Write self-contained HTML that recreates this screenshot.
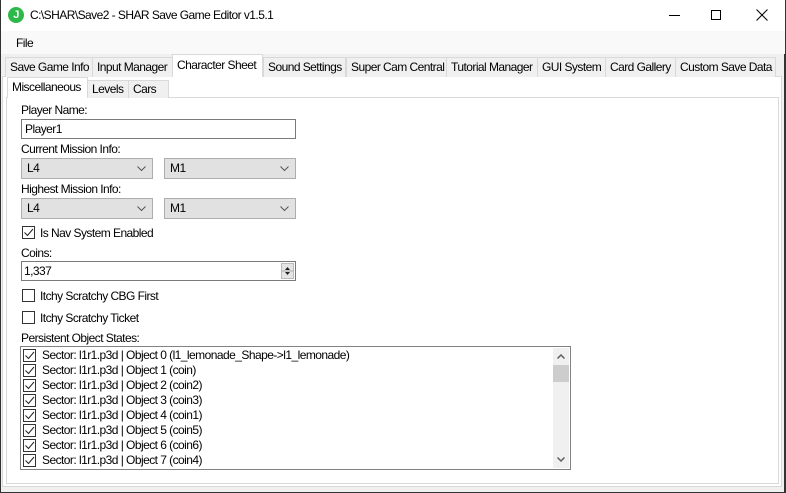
<!DOCTYPE html>
<html><head><meta charset="utf-8"><style>
*{box-sizing:border-box;margin:0;padding:0}
body{width:786px;height:493px;background:#fff;font-family:"Liberation Sans",sans-serif;font-size:12px;color:#000;position:relative;overflow:hidden;letter-spacing:-0.55px}
.a{position:absolute}
.win{left:0;top:0;width:786px;height:493px;border:1px solid #333;border-top:none}
.tab{position:absolute;top:57px;height:20px;border:1px solid #d9d9d9;border-bottom:none;background:#f0f0f0;line-height:18px;padding-left:4px;white-space:nowrap;overflow:hidden}
.stab{position:absolute;top:80px;height:18px;border:1px solid #d9d9d9;border-bottom:none;background:#f0f0f0;line-height:17px;padding-left:4px;white-space:nowrap;overflow:hidden}
.sel{background:#fff;border-color:#d9d9d9;z-index:2}
.box{position:absolute;border:1px solid #7a7a7a;background:#fff}
.cmb{position:absolute;height:21px;border:1px solid #adadad;background:#e1e1e1;padding-left:5px;line-height:19px}
.cmb svg{position:absolute;right:6px;top:7px}
.cb{position:absolute;width:13px;height:13px;border:1px solid #333;background:#fff}
.row{position:absolute;left:2px;height:15px;line-height:15px;white-space:nowrap}
.row .cb{left:0;top:1px;position:absolute}
.row span{position:absolute;left:19px;top:0}
</style></head><body>
<div class="a win"></div>
<div class="a" style="left:8px;top:7px;width:16px;height:16px;border-radius:50%;background:#2db84a;color:#fff;font-weight:bold;font-size:11px;text-align:center;line-height:16px">J</div>
<div class="a" style="left:30px;top:8px;font-size:12px">C:\SHAR\Save2 - SHAR Save Game Editor v1.5.1</div>
<div class="a" style="left:669px;top:15px;width:11px;height:1px;background:#000"></div>
<div class="a" style="left:711px;top:10px;width:10px;height:10px;border:1px solid #000"></div>
<svg class="a" style="left:756px;top:9px" width="12" height="12"><path d="M0.5 0.5L11.5 11.5M11.5 0.5L0.5 11.5" stroke="#000" stroke-width="1"/></svg>
<div class="a" style="left:1px;top:31px;width:784px;height:23px;background:#f9f9f9"></div>
<div class="a" style="left:16px;top:36px">File</div>
<div class="a" style="left:1px;top:54px;width:784px;height:438px;background:#f0f0f0;border-right:1px solid #333"></div>
<div class="a" style="left:2px;top:76px;width:780px;height:411px;border:1px solid #d9d9d9;background:#fff"></div>
<div class="tab" style="left:5px;width:88px">Save Game Info</div>
<div class="tab" style="left:92px;width:81px">Input Manager</div>
<div class="tab sel" style="left:172px;top:54px;height:23px;width:91px;line-height:21px">Character Sheet</div>
<div class="tab" style="left:263px;width:83px">Sound Settings</div>
<div class="tab" style="left:346px;width:101px">Super Cam Central</div>
<div class="tab" style="left:446px;width:92px">Tutorial Manager</div>
<div class="tab" style="left:537px;width:69px">GUI System</div>
<div class="tab" style="left:605px;width:71px">Card Gallery</div>
<div class="tab" style="left:675px;width:101px">Custom Save Data</div>
<div class="a" style="left:6px;top:97px;width:773px;height:387px;border:1px solid #d9d9d9;background:#fff"></div>
<div class="stab sel" style="left:7px;top:77px;height:21px;width:81px;line-height:19px">Miscellaneous</div>
<div class="stab" style="left:87px;width:42px">Levels</div>
<div class="stab" style="left:128px;width:41px">Cars</div>
<div class="a" style="left:21px;top:103px">Player Name:</div>
<div class="box" style="left:21px;top:119px;width:275px;height:20px;padding-left:3px;line-height:18px">Player1</div>
<div class="a" style="left:21px;top:142px">Current Mission Info:</div>
<div class="cmb" style="left:21px;top:158px;width:132px">L4<svg width="9" height="6"><path d="M0.5 0.5L4.5 4.5L8.5 0.5" stroke="#555" fill="none"/></svg></div>
<div class="cmb" style="left:164px;top:158px;width:132px">M1<svg width="9" height="6"><path d="M0.5 0.5L4.5 4.5L8.5 0.5" stroke="#555" fill="none"/></svg></div>
<div class="a" style="left:21px;top:182px">Highest Mission Info:</div>
<div class="cmb" style="left:21px;top:198px;width:132px">L4<svg width="9" height="6"><path d="M0.5 0.5L4.5 4.5L8.5 0.5" stroke="#555" fill="none"/></svg></div>
<div class="cmb" style="left:164px;top:198px;width:132px">M1<svg width="9" height="6"><path d="M0.5 0.5L4.5 4.5L8.5 0.5" stroke="#555" fill="none"/></svg></div>
<div class="cb" style="left:22px;top:226px"><svg width="11" height="11" style="position:absolute;left:0;top:0"><path d="M1.5 5.5L4.5 8.5L10 2" stroke="#222" fill="none"/></svg></div>
<div class="a" style="left:40px;top:226px">Is Nav System Enabled</div>
<div class="a" style="left:21px;top:246px">Coins:</div>
<div class="box" style="left:21px;top:261px;width:275px;height:20px;padding-left:2px;line-height:18px">1,337
<div class="a" style="right:1px;top:1px;width:13px;height:16px;background:#e5e5e5;border:1px solid #bbb"><svg width="11" height="14" style="position:absolute;left:0;top:0"><path d="M3 6L5.5 3L8 6Z M3 8L5.5 11L8 8Z" fill="#222"/><path d="M0 7H11" stroke="#aaa"/></svg></div></div>
<div class="cb" style="left:22px;top:289px"></div>
<div class="a" style="left:40px;top:289px">Itchy Scratchy CBG First</div>
<div class="cb" style="left:22px;top:311px"></div>
<div class="a" style="left:40px;top:311px">Itchy Scratchy Ticket</div>
<div class="a" style="left:21px;top:331px">Persistent Object States:</div>
<div class="a" style="left:20px;top:346px;width:551px;height:124px;border:1px solid #828282;background:#fff">
<div class="a" style="right:1px;top:1px;width:16px;height:120px;background:#f0f0f0"></div>
<div class="a" style="right:1px;top:18px;width:16px;height:17px;background:#cdcdcd"></div>
<svg class="a" style="right:5px;top:7px" width="8" height="5"><path d="M0.5 4.5L4 1L7.5 4.5" stroke="#606060" stroke-width="1.5" fill="none"/></svg>
<svg class="a" style="right:5px;top:110px" width="8" height="5"><path d="M0.5 0.5L4 4L7.5 0.5" stroke="#606060" stroke-width="1.5" fill="none"/></svg>
<div class="row" style="top:1px"><div class="cb"><svg width="11" height="11"><path d="M1.5 5.5L4.5 8.5L10 2" stroke="#222" fill="none"/></svg></div><span>Sector: l1r1.p3d | Object 0 (l1_lemonade_Shape-&gt;l1_lemonade)</span></div>
<div class="row" style="top:16px"><div class="cb"><svg width="11" height="11"><path d="M1.5 5.5L4.5 8.5L10 2" stroke="#222" fill="none"/></svg></div><span>Sector: l1r1.p3d | Object 1 (coin)</span></div>
<div class="row" style="top:31px"><div class="cb"><svg width="11" height="11"><path d="M1.5 5.5L4.5 8.5L10 2" stroke="#222" fill="none"/></svg></div><span>Sector: l1r1.p3d | Object 2 (coin2)</span></div>
<div class="row" style="top:46px"><div class="cb"><svg width="11" height="11"><path d="M1.5 5.5L4.5 8.5L10 2" stroke="#222" fill="none"/></svg></div><span>Sector: l1r1.p3d | Object 3 (coin3)</span></div>
<div class="row" style="top:61px"><div class="cb"><svg width="11" height="11"><path d="M1.5 5.5L4.5 8.5L10 2" stroke="#222" fill="none"/></svg></div><span>Sector: l1r1.p3d | Object 4 (coin1)</span></div>
<div class="row" style="top:76px"><div class="cb"><svg width="11" height="11"><path d="M1.5 5.5L4.5 8.5L10 2" stroke="#222" fill="none"/></svg></div><span>Sector: l1r1.p3d | Object 5 (coin5)</span></div>
<div class="row" style="top:91px"><div class="cb"><svg width="11" height="11"><path d="M1.5 5.5L4.5 8.5L10 2" stroke="#222" fill="none"/></svg></div><span>Sector: l1r1.p3d | Object 6 (coin6)</span></div>
<div class="row" style="top:106px"><div class="cb"><svg width="11" height="11"><path d="M1.5 5.5L4.5 8.5L10 2" stroke="#222" fill="none"/></svg></div><span>Sector: l1r1.p3d | Object 7 (coin4)</span></div>
</div>
</body></html>
